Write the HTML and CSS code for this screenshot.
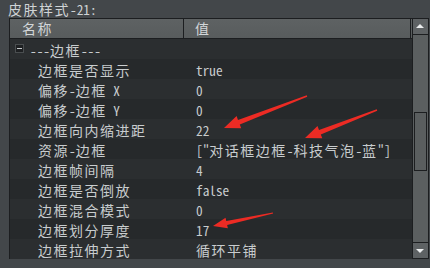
FILE: index.html
```html
<!DOCTYPE html>
<html lang="zh">
<head>
    <meta charset="UTF-8">
    <title>皮肤样式-21</title>
    <link rel="stylesheet" href="styles.css">
</head>
<body>
    <div class="title"><span class="z">皮肤样式</span>-21:</div>
    <div class="panel">
        <div class="list">
            <div class="head">
                <div class="hname"><span class="z">名称</span></div>
                <div class="hval"><span class="z">值</span></div>
            </div>
            <div class="row group">
                <span class="fold"></span>---<span class="z">边框</span>---
            </div>
            <div class="row dark"><div class="name"><span class="z">边框是否显示</span></div><div class="val">true</div></div>
            <div class="row"><div class="name"><span class="z">偏移</span>-<span class="z">边框</span> X</div><div class="val">0</div></div>
            <div class="row dark"><div class="name"><span class="z">偏移</span>-<span class="z">边框</span> Y</div><div class="val">0</div></div>
            <div class="row"><div class="name"><span class="z">边框向内缩进距</span></div><div class="val">22</div></div>
            <div class="row dark"><div class="name"><span class="z">资源</span>-<span class="z">边框</span></div><div class="val">["<span class="z">对话框边框</span>-<span class="z">科技气泡</span>-<span class="z">蓝</span>"]</div></div>
            <div class="row"><div class="name"><span class="z">边框帧间隔</span></div><div class="val">4</div></div>
            <div class="row dark"><div class="name"><span class="z">边框是否倒放</span></div><div class="val">false</div></div>
            <div class="row"><div class="name"><span class="z">边框混合模式</span></div><div class="val">0</div></div>
            <div class="row dark"><div class="name"><span class="z">边框划分厚度</span></div><div class="val">17</div></div>
            <div class="row"><div class="name"><span class="z">边框拉伸方式</span></div><div class="val"><span class="z">循环平铺</span></div></div>
        </div>
        <div class="scroll">
            <div class="btn up"></div>
            <div class="track"><div class="thumb"></div></div>
            <div class="btn down"></div>
        </div>
    </div>

    <!-- red annotation arrows drawn on top of the screenshot -->
    <svg class="marks" width="430" height="268" viewBox="0 0 430 268">
        <polygon points="306.75,95.35 238,119.9 236.6,116.1 224,128 241.2,128.3 239.8,124.5 307.25,96.65"/>
        <polygon points="376.75,109.35 319,129.9 317.5,126.1 305,138 322.3,138.3 320.8,134.5 377.25,110.65"/>
        <polygon points="272.87,212.41 226.28,221.05 225.53,217.63 213,226 227.87,228.37 227.12,224.95 273.13,213.59"/>
    </svg>
</body>
</html>
```

FILE: styles.css
```css
body {
    margin: 0;
    width: 430px;
    height: 268px;
    overflow: hidden;
    background-color: #43474a;
    color: #c8ccce;
    font-family: "Noto Sans Mono CJK SC", "DejaVu Sans Mono", monospace;
    font-size: 13.3px;
}

.z {
    font-family: "Noto Sans CJK SC", sans-serif;
    font-size: 14px;
    letter-spacing: 1.5px;
}

.title {
    height: 18px;
    line-height: 18px;
    padding-left: 8px;
    color: #cfd3d5;
}

.panel {
    display: flex;
    width: 420px;
    height: 241px;
    margin-left: 9px;
    box-sizing: border-box;
    border: 1px solid #1c1e20;
}

.list {
    flex: 1;
    display: flex;
    flex-direction: column;
}

.head {
    display: flex;
    height: 19px;
    line-height: 19px;
    background: linear-gradient(#5e6263, #585c5d);
    border-bottom: 1px solid #1c1e20;
    color: #d2d6d8;
}

.hname {
    width: 161px;
    padding-left: 12px;
    border-right: 1px solid #1c1e20;
}

.hval {
    flex: 1;
    padding-left: 11px;
    border-right: 1px solid #1c1e20;
    margin-right: 1px;
}

.row {
    display: flex;
    align-items: center;
    height: 20px;
    padding-top: 2px;
    box-sizing: border-box;
    background-color: #2b2e30;
    white-space: nowrap;
}

.row.dark {
    background-color: #26292b;
}

.group {
    padding-left: 5px;
}

.fold {
    position: relative;
    width: 7px;
    height: 7px;
    margin-right: 6px;
    margin-top: -3px;
    border: 1px solid #4a4e50;
    background-color: #1e2022;
}

.fold::after {
    content: "";
    position: absolute;
    left: 1px;
    top: 3px;
    width: 5px;
    height: 1px;
    background-color: #c8ccce;
}

.name {
    width: 158px;
    padding-left: 28px;
}

.val {
    flex: 1;
}

.scroll {
    width: 15px;
    display: flex;
    flex-direction: column;
    border-left: 1px solid #1c1e20;
    background-color: #5b5f60;
}

.btn {
    position: relative;
    height: 15px;
    background-color: #5e6264;
}

.btn.up {
    border-bottom: 1px solid #1c1e20;
}

.btn.down {
    border-top: 1px solid #1c1e20;
}

.btn::after {
    content: "";
    position: absolute;
    left: 3px;
    border-left: 4px solid transparent;
    border-right: 4px solid transparent;
}

.btn.up::after {
    top: 5px;
    border-bottom: 4px solid #eceeef;
}

.btn.down::after {
    top: 6px;
    border-top: 4px solid #eceeef;
}

.track {
    flex: 1;
    padding-top: 77px;
}

.thumb {
    height: 57px;
    margin: 0 1px;
    border: 1px solid #1c1e20;
    background-color: #5a5e5f;
}

.marks {
    position: absolute;
    left: 0;
    top: 0;
    fill: #ec2b24;
}
```
